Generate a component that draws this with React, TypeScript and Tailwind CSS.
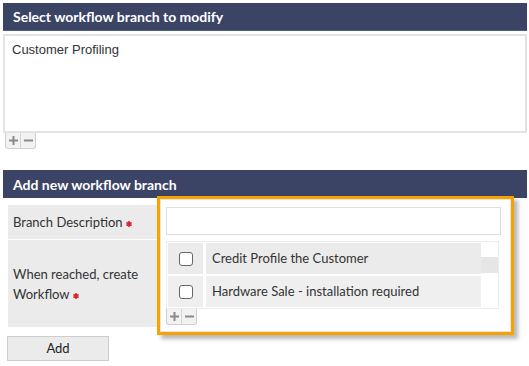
import { useState } from 'react';

const lato = { fontFamily: 'Lato, "Open Sans", sans-serif' };

function PlusMinus() {
    return (
        <div className="flex h-[16px] w-[31px] rounded-b-[3px] border border-t-0 border-[#cfcfcf] bg-[#f2f2f2] text-[#8a8a8a]">
            <div className="flex w-[15px] items-center justify-center border-r border-[#d6d6d6]">
                <svg width="9" height="9" viewBox="0 0 9 9">
                    <path d="M4.5 0v9M0 4.5h9" stroke="currentColor" strokeWidth="2" />
                </svg>
            </div>
            <div className="flex flex-1 items-center justify-center">
                <svg width="9" height="9" viewBox="0 0 9 9">
                    <path d="M0 4.5h9" stroke="currentColor" strokeWidth="2" />
                </svg>
            </div>
        </div>
    );
}

// little red "required" asterisk
function Star() {
    return (
        <svg width="6" height="6" viewBox="0 0 6 6" className="ml-[3px] inline-block translate-y-[1px] align-middle text-[#e0202a]">
            <path d="M3 0v6M0.4 1.5l5.2 3M0.4 4.5l5.2-3" stroke="currentColor" strokeWidth="1.5" />
        </svg>
    );
}

export default function App() {
    const [checked, setChecked] = useState<Record<string, boolean>>({});
    const workflows = ['Credit Profile the Customer', 'Hardware Sale - installation required'];

    return (
        <div className="h-[366px] w-[529px] bg-white pl-[3px] pt-[3px]" style={lato}>
            <div className="w-[524px]">
                <div className="flex h-[28px] items-center border-b border-[#4f6079] bg-[#3c4465] pl-[10px] text-[14px] font-bold text-white">
                    Select workflow branch to modify
                </div>
                <div
                    className="mt-[3px] h-[99px] border-2 border-[#e3e3e3] px-[7px] pt-[4px] text-[13px] text-[#333]"
                    style={{ fontFamily: '"Liberation Sans", Arial, sans-serif' }}
                >
                    Customer Profiling
                </div>
                <div className="ml-[2px]">
                    <PlusMinus />
                </div>

                <div className="mt-[21px] flex h-[28px] items-center bg-[#3c4465] pl-[10px] text-[14px] font-bold text-white">
                    Add new workflow branch
                </div>

                <div className="flex items-start">
                    <div className="ml-[5px] mt-[7px] flex w-[149px] flex-col gap-[1px] text-[13px] text-[#333]">
                        <div className="flex h-[34px] items-center bg-[#ebebeb] pl-[5px] pt-[1px]">
                            <span>
                                Branch Description
                                <Star />
                            </span>
                        </div>
                        <div className="flex h-[87px] items-center bg-[#ebebeb] pl-[5px] leading-[20px]">
                            <div>
                                When reached, create
                                <br />
                                Workflow
                                <Star />
                            </div>
                        </div>
                    </div>

                    <div className="relative -mt-[2px] h-[139px] w-[357px] border-[3px] border-[#f5a300] bg-white shadow-[4px_4px_4px_rgba(0,0,0,0.28)]">
                        <div className="h-full border border-[#e4e4e4] pl-[5px] pt-[7px]">
                            <input
                                type="text"
                                className="block h-[28px] w-[335px] border border-[#dedede] bg-white outline-none"
                            />
                            <div className="mt-[6px] flex h-[68px] w-[333px] border border-[#ececec] bg-white">
                                <div className="flex flex-1 flex-col gap-[2px] overflow-hidden pl-[1px] pt-[1px]">
                                    {workflows.map((w, i) => (
                                        <div key={w} className="flex h-[31px] shrink-0 gap-[3px]">
                                            <label
                                                className={`flex w-[35px] items-center justify-center ${i === 0 ? 'bg-[#ebebeb]' : 'bg-[#efefef]'}`}
                                            >
                                                <input
                                                    type="checkbox"
                                                    checked={!!checked[w]}
                                                    onChange={() => setChecked({ ...checked, [w]: !checked[w] })}
                                                    className="h-[14px] w-[14px] appearance-none rounded-[3px] border border-[#666] bg-white"
                                                />
                                            </label>
                                            <div
                                                className={`flex flex-1 items-center pl-[6px] pt-[1px] text-[13px] text-[#333] ${i === 0 ? 'bg-[#ebebeb]' : 'bg-[#efefef]'}`}
                                            >
                                                {w}
                                            </div>
                                        </div>
                                    ))}
                                    <div className="h-[31px] shrink-0 bg-[#efefef]" />
                                </div>
                                <div className="w-[17px] pt-[15px]">
                                    <div className="h-[16px] bg-[#e6e6e6]" />
                                </div>
                            </div>
                            <PlusMinus />
                        </div>
                    </div>
                </div>

                <button className="ml-[4px] mt-[1px] h-[25px] w-[102px] border border-[#cdcdcd] bg-[#ebebeb] text-[13px] text-[#222]">
                    Add
                </button>
            </div>
        </div>
    );
}
